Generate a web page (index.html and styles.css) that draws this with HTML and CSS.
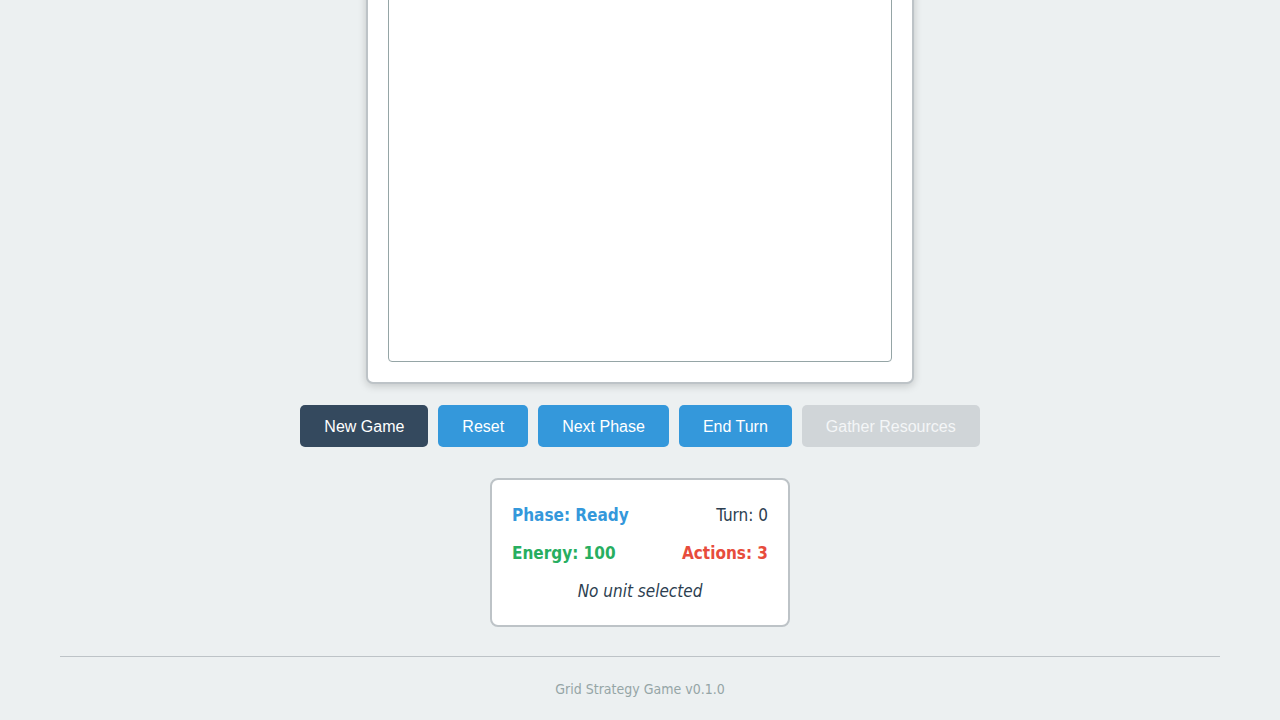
FILE: index.html
```html
<!DOCTYPE html>
<html lang="en">
<head>
<meta charset="utf-8">
<title>Grid Strategy Game</title>
<link rel="stylesheet" href="styles.css">
</head>
<body>
<div class="app">
  <main class="game">
    <section class="board-card">
      <div class="board-canvas"></div>
    </section>
    <div class="controls">
      <button class="btn btn-dark">New Game</button>
      <button class="btn btn-blue">Reset</button>
      <button class="btn btn-blue">Next Phase</button>
      <button class="btn btn-blue">End Turn</button>
      <button class="btn btn-disabled" disabled>Gather Resources</button>
    </div>
    <section class="status">
      <div class="status-row">
        <span class="phase">Phase: Ready</span>
        <span class="turn">Turn: 0</span>
      </div>
      <div class="status-row">
        <span class="energy">Energy: 100</span>
        <span class="actions">Actions: 3</span>
      </div>
      <div class="selection">No unit selected</div>
    </section>
  </main>
  <footer class="footer">Grid Strategy Game v0.1.0</footer>
</div>
</body>
</html>
```
FILE: styles.css
```css
html, body {
  margin: 0;
  padding: 0;
  background: #ecf0f1;
  overflow: hidden;
}
body {
  font-family: "DejaVu Sans Condensed", "DejaVu Sans", sans-serif;
  color: #2c3e50;
}
.app {
  padding: 0 60px;
}
.game {
  display: flex;
  flex-direction: column;
  align-items: center;
}
.board-card {
  margin-top: -62px;
  background: #fff;
  border: 2px solid #bdc3c7;
  border-radius: 7px;
  padding: 20px;
  box-shadow: 0 2px 8px rgba(0, 0, 0, 0.18);
}
.board-canvas {
  width: 502px;
  height: 400px;
  border: 1px solid #95a5a6;
  border-radius: 4px;
  background: #fff;
}
.controls {
  display: flex;
  gap: 10px;
  margin-top: 21px;
}
.btn {
  font-family: "Liberation Sans", Arial, sans-serif;
  font-size: 16px;
  height: 42px;
  padding: 1px 24px 0;
  border: none;
  border-radius: 5px;
  color: #fff;
  cursor: pointer;
}
.btn-dark { background: #34495e; }
.btn-blue { background: #3498db; }
.btn-disabled { background: #d0d5d8; color: #f4f6f7; cursor: default; }
.status {
  margin-top: 31px;
  width: 256px;
  background: #fff;
  border: 2px solid #bdc3c7;
  border-radius: 8px;
  padding: 24px 20px 23px;
  font-size: 17px;
}
.status-row {
  display: flex;
  justify-content: space-between;
  line-height: 22px;
  margin-bottom: 16px;
}
.phase { color: #3498db; font-weight: bold; }
.energy { color: #27ae60; font-weight: bold; }
.actions { color: #e74c3c; font-weight: bold; }
.turn { color: #2c3e50; }
.selection {
  text-align: center;
  font-style: italic;
  line-height: 22px;
}
.footer {
  margin-top: 29px;
  border-top: 1px solid #bdc3c7;
  padding-top: 24px;
  text-align: center;
  font-size: 14px;
  color: #95a5a6;
}
```
